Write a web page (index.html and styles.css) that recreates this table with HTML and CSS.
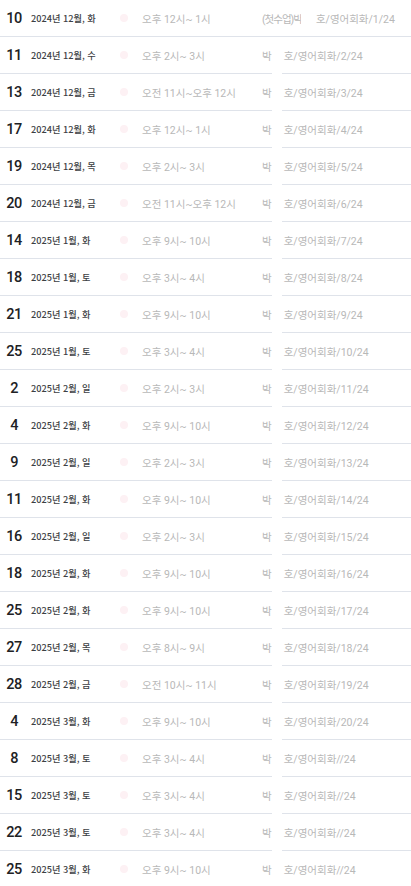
FILE: index.html
```html
<!DOCTYPE html>
<html lang="ko">
  <head>
    <meta charset="UTF-8" />
    <title>일정</title>
    <link rel="stylesheet" href="styles.css">
  </head>
  <body>
    <ul class="schedule">
      <li class="row first">
        <span class="day">10</span><span class="date">2024년 12월, 화</span><span class="dot"></span>
        <span class="time">오후 12시~ 1시</span>
        <span class="name"><span class="first-name">(첫수업)박</span><span class="rest">호/영어회화/1/24</span></span>
        <span class="mask"></span>
      </li>
      <li class="row">
        <span class="day">11</span><span class="date">2024년 12월, 수</span><span class="dot"></span>
        <span class="time">오후 2시~ 3시</span>
        <span class="name"><span class="first-name">박</span><span class="rest">호/영어회화/2/24</span></span>
        <span class="mask"></span>
      </li>
      <li class="row">
        <span class="day">13</span><span class="date">2024년 12월, 금</span><span class="dot"></span>
        <span class="time">오전 11시~오후 12시</span>
        <span class="name"><span class="first-name">박</span><span class="rest">호/영어회화/3/24</span></span>
        <span class="mask"></span>
      </li>
      <li class="row">
        <span class="day">17</span><span class="date">2024년 12월, 화</span><span class="dot"></span>
        <span class="time">오후 12시~ 1시</span>
        <span class="name"><span class="first-name">박</span><span class="rest">호/영어회화/4/24</span></span>
        <span class="mask"></span>
      </li>
      <li class="row">
        <span class="day">19</span><span class="date">2024년 12월, 목</span><span class="dot"></span>
        <span class="time">오후 2시~ 3시</span>
        <span class="name"><span class="first-name">박</span><span class="rest">호/영어회화/5/24</span></span>
        <span class="mask"></span>
      </li>
      <li class="row">
        <span class="day">20</span><span class="date">2024년 12월, 금</span><span class="dot"></span>
        <span class="time">오전 11시~오후 12시</span>
        <span class="name"><span class="first-name">박</span><span class="rest">호/영어회화/6/24</span></span>
        <span class="mask"></span>
      </li>
      <li class="row">
        <span class="day">14</span><span class="date">2025년 1월, 화</span><span class="dot"></span>
        <span class="time">오후 9시~ 10시</span>
        <span class="name"><span class="first-name">박</span><span class="rest">호/영어회화/7/24</span></span>
        <span class="mask"></span>
      </li>
      <li class="row">
        <span class="day">18</span><span class="date">2025년 1월, 토</span><span class="dot"></span>
        <span class="time">오후 3시~ 4시</span>
        <span class="name"><span class="first-name">박</span><span class="rest">호/영어회화/8/24</span></span>
        <span class="mask"></span>
      </li>
      <li class="row">
        <span class="day">21</span><span class="date">2025년 1월, 화</span><span class="dot"></span>
        <span class="time">오후 9시~ 10시</span>
        <span class="name"><span class="first-name">박</span><span class="rest">호/영어회화/9/24</span></span>
        <span class="mask"></span>
      </li>
      <li class="row">
        <span class="day">25</span><span class="date">2025년 1월, 토</span><span class="dot"></span>
        <span class="time">오후 3시~ 4시</span>
        <span class="name"><span class="first-name">박</span><span class="rest">호/영어회화/10/24</span></span>
        <span class="mask"></span>
      </li>
      <li class="row">
        <span class="day">2</span><span class="date">2025년 2월, 일</span><span class="dot"></span>
        <span class="time">오후 2시~ 3시</span>
        <span class="name"><span class="first-name">박</span><span class="rest">호/영어회화/11/24</span></span>
        <span class="mask"></span>
      </li>
      <li class="row">
        <span class="day">4</span><span class="date">2025년 2월, 화</span><span class="dot"></span>
        <span class="time">오후 9시~ 10시</span>
        <span class="name"><span class="first-name">박</span><span class="rest">호/영어회화/12/24</span></span>
        <span class="mask"></span>
      </li>
      <li class="row">
        <span class="day">9</span><span class="date">2025년 2월, 일</span><span class="dot"></span>
        <span class="time">오후 2시~ 3시</span>
        <span class="name"><span class="first-name">박</span><span class="rest">호/영어회화/13/24</span></span>
        <span class="mask"></span>
      </li>
      <li class="row">
        <span class="day">11</span><span class="date">2025년 2월, 화</span><span class="dot"></span>
        <span class="time">오후 9시~ 10시</span>
        <span class="name"><span class="first-name">박</span><span class="rest">호/영어회화/14/24</span></span>
        <span class="mask"></span>
      </li>
      <li class="row">
        <span class="day">16</span><span class="date">2025년 2월, 일</span><span class="dot"></span>
        <span class="time">오후 2시~ 3시</span>
        <span class="name"><span class="first-name">박</span><span class="rest">호/영어회화/15/24</span></span>
        <span class="mask"></span>
      </li>
      <li class="row">
        <span class="day">18</span><span class="date">2025년 2월, 화</span><span class="dot"></span>
        <span class="time">오후 9시~ 10시</span>
        <span class="name"><span class="first-name">박</span><span class="rest">호/영어회화/16/24</span></span>
        <span class="mask"></span>
      </li>
      <li class="row">
        <span class="day">25</span><span class="date">2025년 2월, 화</span><span class="dot"></span>
        <span class="time">오후 9시~ 10시</span>
        <span class="name"><span class="first-name">박</span><span class="rest">호/영어회화/17/24</span></span>
        <span class="mask"></span>
      </li>
      <li class="row">
        <span class="day">27</span><span class="date">2025년 2월, 목</span><span class="dot"></span>
        <span class="time">오후 8시~ 9시</span>
        <span class="name"><span class="first-name">박</span><span class="rest">호/영어회화/18/24</span></span>
        <span class="mask"></span>
      </li>
      <li class="row">
        <span class="day">28</span><span class="date">2025년 2월, 금</span><span class="dot"></span>
        <span class="time">오전 10시~ 11시</span>
        <span class="name"><span class="first-name">박</span><span class="rest">호/영어회화/19/24</span></span>
        <span class="mask"></span>
      </li>
      <li class="row">
        <span class="day">4</span><span class="date">2025년 3월, 화</span><span class="dot"></span>
        <span class="time">오후 9시~ 10시</span>
        <span class="name"><span class="first-name">박</span><span class="rest">호/영어회화/20/24</span></span>
        <span class="mask"></span>
      </li>
      <li class="row">
        <span class="day">8</span><span class="date">2025년 3월, 토</span><span class="dot"></span>
        <span class="time">오후 3시~ 4시</span>
        <span class="name"><span class="first-name">박</span><span class="rest">호/영어회화//24</span></span>
        <span class="mask"></span>
      </li>
      <li class="row">
        <span class="day">15</span><span class="date">2025년 3월, 토</span><span class="dot"></span>
        <span class="time">오후 3시~ 4시</span>
        <span class="name"><span class="first-name">박</span><span class="rest">호/영어회화//24</span></span>
        <span class="mask"></span>
      </li>
      <li class="row">
        <span class="day">22</span><span class="date">2025년 3월, 토</span><span class="dot"></span>
        <span class="time">오후 3시~ 4시</span>
        <span class="name"><span class="first-name">박</span><span class="rest">호/영어회화//24</span></span>
        <span class="mask"></span>
      </li>
      <li class="row">
        <span class="day">25</span><span class="date">2025년 3월, 화</span><span class="dot"></span>
        <span class="time">오후 9시~ 10시</span>
        <span class="name"><span class="first-name">박</span><span class="rest">호/영어회화//24</span></span>
        <span class="mask"></span>
      </li>
    </ul>
  </body>
</html>
```

FILE: styles.css
```css
body {
  margin: 0;
  background: #fff;
  font-family: Roboto, "Noto Sans CJK KR", sans-serif;
}
.schedule {
  list-style: none;
  margin: 0;
  padding: 0;
}
.row {
  position: relative;
  display: flex;
  align-items: center;
  height: 36px;
  padding-left: 4px;
  border-bottom: 1px solid #dfe3ea;
  white-space: nowrap;
}
.row > span {
  flex-shrink: 0;
}
.day {
  width: 20px;
  text-align: center;
  font-size: 14.5px;
  font-weight: 500;
  letter-spacing: -0.5px;
  color: #202124;
}
.date {
  width: 89px;
  margin-left: 7px;
  font-family: "Noto Sans CJK KR", sans-serif;
  font-size: 9.2px;
  font-weight: 500;
  color: #3c4043;
}
.dot {
  width: 8px;
  height: 8px;
  margin-right: 14px;
  border-radius: 50%;
  background: #fdf1f4;
}
.time {
  width: 120px;
  font-size: 10.5px;
  color: #b8b8b8;
}
.name {
  display: flex;
  font-size: 10.5px;
  color: #b8b8b8;
}
.rest {
  margin-left: 12px;
}
.first .first-name {
  letter-spacing: -1px;
}
.first .rest {
  margin-left: 14px;
}
/* white box that hides the middle of the name */
.mask {
  position: absolute;
  left: 272px;
  width: 10px;
  top: 12px;
  bottom: -1px;
  background: #fff;
}
.first .mask {
  left: 301px;
  width: 9px;
  bottom: 8px;
}
```
